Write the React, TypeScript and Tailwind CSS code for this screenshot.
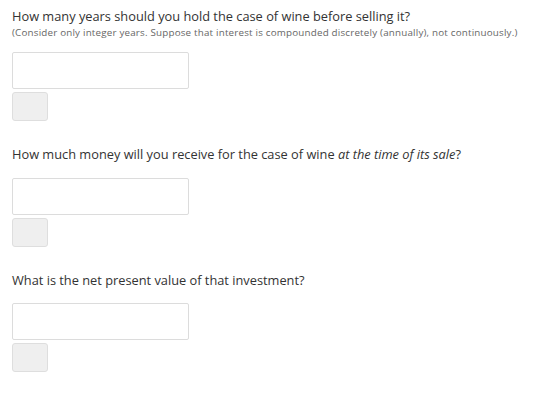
const AnswerBox = () => {
  return (
    <div className="flex flex-col gap-[3px]">
      <input
        type="text"
        className="w-[177px] h-[37px] rounded-[2px] border border-[#dcdcdc] bg-white outline-none"
      />
      <button className="w-[36px] h-[29px] rounded-[3px] border border-[#dedede] bg-[#efefef]" />
    </div>
  )
}

export default function App() {
  return (
    <div
      className="w-[559px] h-[414px] bg-white text-[#333] px-[12px] pt-[8px]"
      style={{ fontFamily: '"Open Sans", sans-serif' }}
    >
      {/* Question 1 */}
      <p className="text-[12.8px] leading-[16px]">
        How many years should you hold the case of wine before selling it?
      </p>
      <p className="text-[9.8px] leading-[12px] tracking-[0.2px] text-[#666] mt-[3px]">
        (Consider only integer years. Suppose that interest is compounded discretely (annually), not continuously.)
      </p>
      <div className="mt-[13px]">
        <AnswerBox />
      </div>

      {/* Question 2 */}
      <p className="text-[12.8px] leading-[16px] mt-[25px]">
        How much money will you receive for the case of wine <em>at the time of its sale</em>?
      </p>
      <div className="mt-[16px]">
        <AnswerBox />
      </div>

      {/* Question 3 */}
      <p className="text-[12.8px] leading-[16px] mt-[25px]">
        What is the net present value of that investment?
      </p>
      <div className="mt-[15px]">
        <AnswerBox />
      </div>
    </div>
  )
}
